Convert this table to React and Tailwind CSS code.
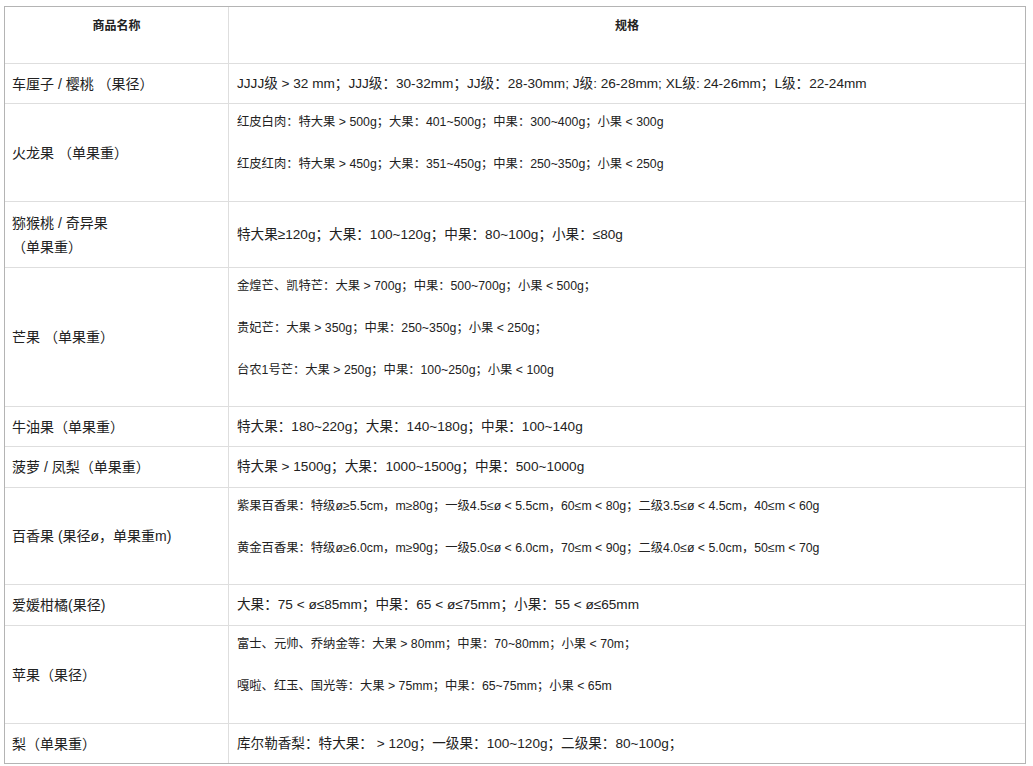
export default function App() {
  const font = { fontFamily: '"Liberation Sans", "Noto Sans CJK SC", sans-serif' };
  const rows = [
    { h: 'h-[40px]', left: ['车厘子 / 樱桃 （果径）'], right: ['JJJJ级 > 32 mm；JJJ级：30-32mm；JJ级：28-30mm; J级: 26-28mm; XL级: 24-26mm；L级：22-24mm'] },
    { h: 'h-[98px]', left: ['火龙果 （单果重）'], multi: ['红皮白肉：特大果 > 500g；大果：401~500g；中果：300~400g；小果 < 300g', '红皮红肉：特大果 > 450g；大果：351~450g；中果：250~350g；小果 < 250g'] },
    { h: 'h-[66px]', left: ['猕猴桃 / 奇异果', '（单果重）'], right: ['特大果≥120g；大果：100~120g；中果：80~100g；小果：≤80g'] },
    { h: 'h-[139px]', left: ['芒果 （单果重）'], multi: ['金煌芒、凯特芒：大果 > 700g；中果：500~700g；小果 < 500g；', '贵妃芒：大果 > 350g；中果：250~350g；小果 < 250g；', '台农1号芒：大果 > 250g；中果：100~250g；小果 < 100g'] },
    { h: 'h-[40px]', left: ['牛油果（单果重）'], right: ['特大果：180~220g；大果：140~180g；中果：100~140g'] },
    { h: 'h-[41px]', left: ['菠萝 / 凤梨（单果重）'], right: ['特大果 > 1500g；大果：1000~1500g；中果：500~1000g'] },
    { h: 'h-[97px]', left: ['百香果 (果径ø，单果重m)'], multi: ['紫果百香果：特级ø≥5.5cm，m≥80g；一级4.5≤ø < 5.5cm，60≤m < 80g；二级3.5≤ø < 4.5cm，40≤m < 60g', '黄金百香果：特级ø≥6.0cm，m≥90g；一级5.0≤ø < 6.0cm，70≤m < 90g；二级4.0≤ø < 5.0cm，50≤m < 70g'] },
    { h: 'h-[41px]', left: ['爱媛柑橘(果径)'], right: ['大果：75 < ø≤85mm；中果：65 < ø≤75mm；小果：55 < ø≤65mm'] },
    { h: 'h-[98px]', left: ['苹果（果径）'], multi: ['富士、元帅、乔纳金等：大果 > 80mm；中果：70~80mm；小果 < 70m；', '嘎啦、红玉、国光等：大果 > 75mm；中果：65~75mm；小果 < 65m'] },
    { h: 'h-[39px]', left: ['梨（单果重）'], right: ['库尔勒香梨：特大果： > 120g；一级果：100~120g；二级果：80~100g；'], last: true },
  ];
  return (
    <div className="min-h-[766px] w-[1033px] bg-white pl-[4px] pt-[6px] text-[#222]" style={font}>
      <div className="flex w-[1022px] flex-col border border-[#b4b4b4]">
        <div className="flex h-[57px] border-b border-[#dedede]">
          <div className="w-[224px] shrink-0 border-r border-[#dedede] pt-[9px] text-center text-[12px] font-bold leading-[20px]">商品名称</div>
          <div className="flex-1 pt-[9px] text-center text-[12px] font-bold leading-[20px]">规格</div>
        </div>
        {rows.map((r, i) => (
          <div key={i} className={`flex ${r.h} ${r.last ? '' : 'border-b border-[#dedede]'}`}>
            <div className="flex w-[224px] shrink-0 flex-col justify-center border-r border-[#dedede] pl-[7px] text-[14px] leading-[24px]">
              {r.left.map((t, j) => (
                <div key={j}>{t}</div>
              ))}
            </div>
            {r.multi ? (
              <div className="flex flex-1 flex-col pl-[8px] pt-[8px] text-[12.3px] leading-[20px]">
                {r.multi.map((t, j) => (
                  <div key={j} className="mb-[22px]">{t}</div>
                ))}
              </div>
            ) : (
              <div className="flex flex-1 items-center pl-[8px] text-[13.6px] leading-[24px]">{r.right[0]}</div>
            )}
          </div>
        ))}
      </div>
    </div>
  );
}
